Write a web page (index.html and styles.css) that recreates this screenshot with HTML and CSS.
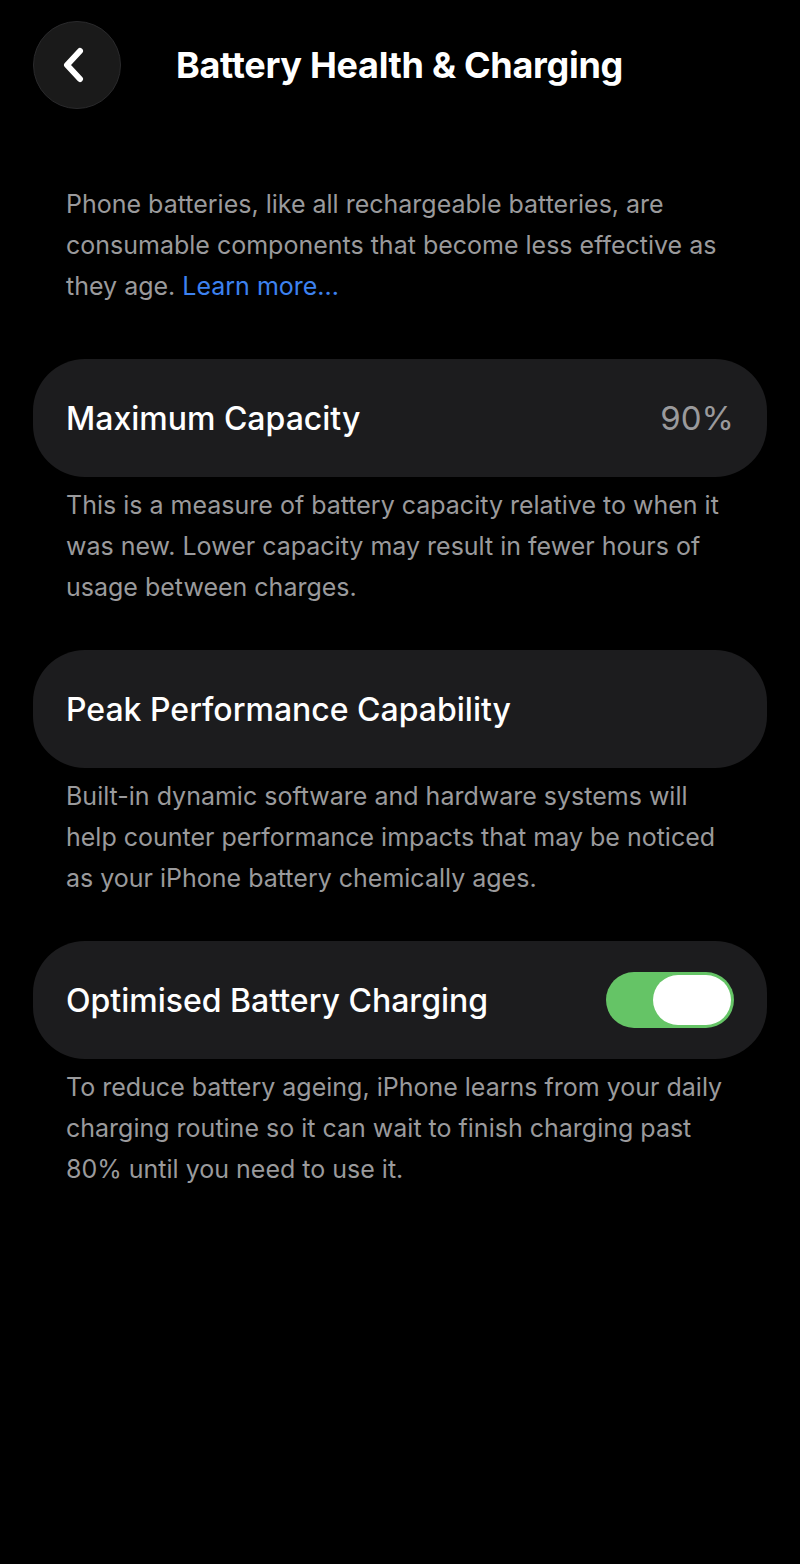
FILE: index.html
```html
<!DOCTYPE html>
<html lang="en">
<head>
  <meta charset="UTF-8" />
  <meta name="viewport" content="width=device-width, initial-scale=1.0"/>
  <title>Battery Health & Charging</title>
  <link rel="stylesheet" href="styles.css">
</head>
<body>
  <div class="screen">
    <!-- Top bar -->
    <div class="nav-bar">
      <button class="back-btn" aria-label="Back">
        <svg width="30" height="36" viewBox="0 0 30 36">
          <path d="M20 4 L7 18 L20 32" fill="none" stroke="#fff" stroke-width="6" stroke-linecap="round" stroke-linejoin="round"/>
        </svg>
      </button>
      <h1 class="nav-title">Battery Health &amp; Charging</h1>
    </div>

    <p class="intro">
      Phone batteries, like all rechargeable batteries, are consumable components that become less effective as they age. <a href="#" class="link">Learn more...</a>
    </p>

    <div class="card">
      <span class="card-label">Maximum Capacity</span>
      <span class="card-value">90%</span>
    </div>
    <p class="footnote">This is a measure of battery capacity relative to when it was new. Lower capacity may result in fewer hours of usage between charges.</p>

    <div class="card">
      <span class="card-label">Peak Performance Capability</span>
    </div>
    <p class="footnote">Built-in dynamic software and hardware systems will help counter performance impacts that may be noticed as your iPhone battery chemically ages.</p>

    <div class="card">
      <span class="card-label">Optimised Battery Charging</span>
      <div class="toggle on"><div class="knob"></div></div>
    </div>
    <p class="footnote">To reduce battery ageing, iPhone learns from your daily charging routine so it can wait to finish charging past 80% until you need to use it.</p>
  </div>
</body>
</html>
```

FILE: styles.css
```css
body {
  margin: 0;
  background-color: #000;
  color: #fff;
  font-family: Inter, "Noto Sans", sans-serif;
}

.screen {
  padding: 21px 33px 40px;
}

.nav-bar {
  display: flex;
  align-items: center;
  gap: 55px;
  height: 88px;
}

.back-btn {
  width: 88px;
  height: 88px;
  border-radius: 50%;
  border: 1px solid #2a2a2c;
  background-color: #1a1a1a;
  display: flex;
  align-items: center;
  justify-content: center;
  padding: 0 4px 0 0;
  flex-shrink: 0;
}

.nav-title {
  margin: 0;
  font-size: 36px;
  font-weight: 700;
  letter-spacing: -0.3px;
}

.intro, .footnote {
  margin: 0;
  padding: 0 30px 0 33px;
  font-size: 25px;
  line-height: 41px;
  color: #9a9a9c;
}

.intro {
  margin-top: 75px;
  margin-bottom: 52px;
}

.link {
  color: #3d82f0;
  text-decoration: none;
}

.card {
  display: flex;
  align-items: center;
  justify-content: space-between;
  height: 118px;
  padding: 0 33px;
  border-radius: 52px;
  background-color: #1c1c1e;
}

.card-label {
  font-size: 32px;
  font-weight: 500;
}

.card-value {
  font-size: 33px;
  color: #9a9a9c;
}

.footnote {
  margin-top: 8px;
  margin-bottom: 42px;
}

.toggle {
  width: 128px;
  height: 56px;
  border-radius: 28px;
  background-color: #3a3a3c;
  padding: 3px;
  box-sizing: border-box;
  display: flex;
}

.toggle.on {
  background-color: #65c466;
  justify-content: flex-end;
}

.knob {
  width: 78px;
  height: 50px;
  border-radius: 25px;
  background-color: #fff;
}
```
